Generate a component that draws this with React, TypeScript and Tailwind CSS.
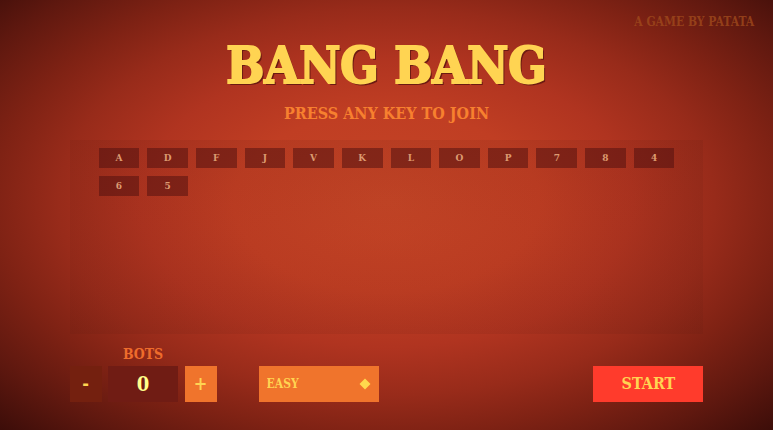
import React, { useState } from 'react';

const playerKeys = ['A', 'D', 'F', 'J', 'V', 'K', 'L', 'O', 'P', '7', '8', '4', '6', '5'];

interface PlayerKeyProps {
  label: string;
}

const PlayerKey: React.FC<PlayerKeyProps> = ({ label }) => (
  <li className="flex h-5 items-center justify-center bg-[#4b0d0d]/50 text-[10px] leading-none text-[#dc9a70]">
    {label}
  </li>
);

const App: React.FC = () => {
  const [bots, setBots] = useState(0);
  const [level, setLevel] = useState('easy');

  return (
    <main className="flex min-h-screen flex-col bg-[radial-gradient(ellipse_at_50%_47%,#c44526_0%,#c03e23_28%,#b03420_45%,#982b1a_60%,#7f2214_72%,#5f180f_86%,#3c0d09_100%)] px-[9%] pb-7 font-['DejaVu_Serif_Condensed','DejaVu_Serif',serif] font-bold uppercase">
      <p className="-mr-[8%] pt-3 text-right text-xs leading-5 text-[#a04a1c]/80">A game by Patata</p>

      <header className="text-center">
        <h1 className="text-[50px] leading-[68px] text-[#ffd452] [-webkit-text-stroke:2px_#ffd452] [text-shadow:2px_2px_0_#6b1a12]">Bang Bang</h1>
        <p className="text-base leading-7 text-[#f7802f]">Press any key to join</p>
      </header>

      <section aria-label="Players" className="mt-3 flex-1 bg-[radial-gradient(ellipse_at_center,#5a1a1008_0%,#5a1a1020_100%)] px-[29px] pt-2">
        <ul className="grid grid-cols-12 gap-2">
          {playerKeys.map((key) => (
            <PlayerKey key={key} label={key} />
          ))}
        </ul>
      </section>

      <footer className="flex items-end pt-2">
        <div className="w-[147px] text-center">
          <label htmlFor="bots" className="block text-sm leading-6 text-[#ee6c2c]">Bots</label>
          <div className="flex h-9 justify-between">
            <button type="button" aria-label="Remove bot" className="w-8 bg-[#74200f] text-lg text-[#ffd452]" onClick={() => setBots(Math.max(0, bots - 1))}>-</button>
            <input id="bots" className="w-[70px] bg-[#701c14] text-center text-xl text-[#ffff8c]" value={bots} readOnly />
            <button type="button" aria-label="Add bot" className="w-8 bg-[#f0742c] text-lg text-[#ffd452]" onClick={() => setBots(bots + 1)}>+</button>
          </div>
        </div>

        <div className="relative ml-[42px] h-9 w-30">
          <select aria-label="Difficulty" className="h-full w-full appearance-none bg-[#f0742c] px-2 text-xs uppercase text-[#ffd452]" value={level} onChange={(e) => setLevel(e.target.value)}>
            <option value="easy">Easy</option>
            <option value="hard">Hard</option>
          </select>
          <svg viewBox="0 0 12 12" className="pointer-events-none absolute top-3 right-2 size-3 fill-[#ffd94d]">
            <path d="M6 0.5 11.5 6 6 11.5 0.5 6Z" />
          </svg>
        </div>

        <button type="button" className="ml-auto h-9 w-[110px] bg-[#ff3b2c] text-base uppercase text-[#ffd452]">Start</button>
      </footer>
    </main>
  );
};

export default App;
